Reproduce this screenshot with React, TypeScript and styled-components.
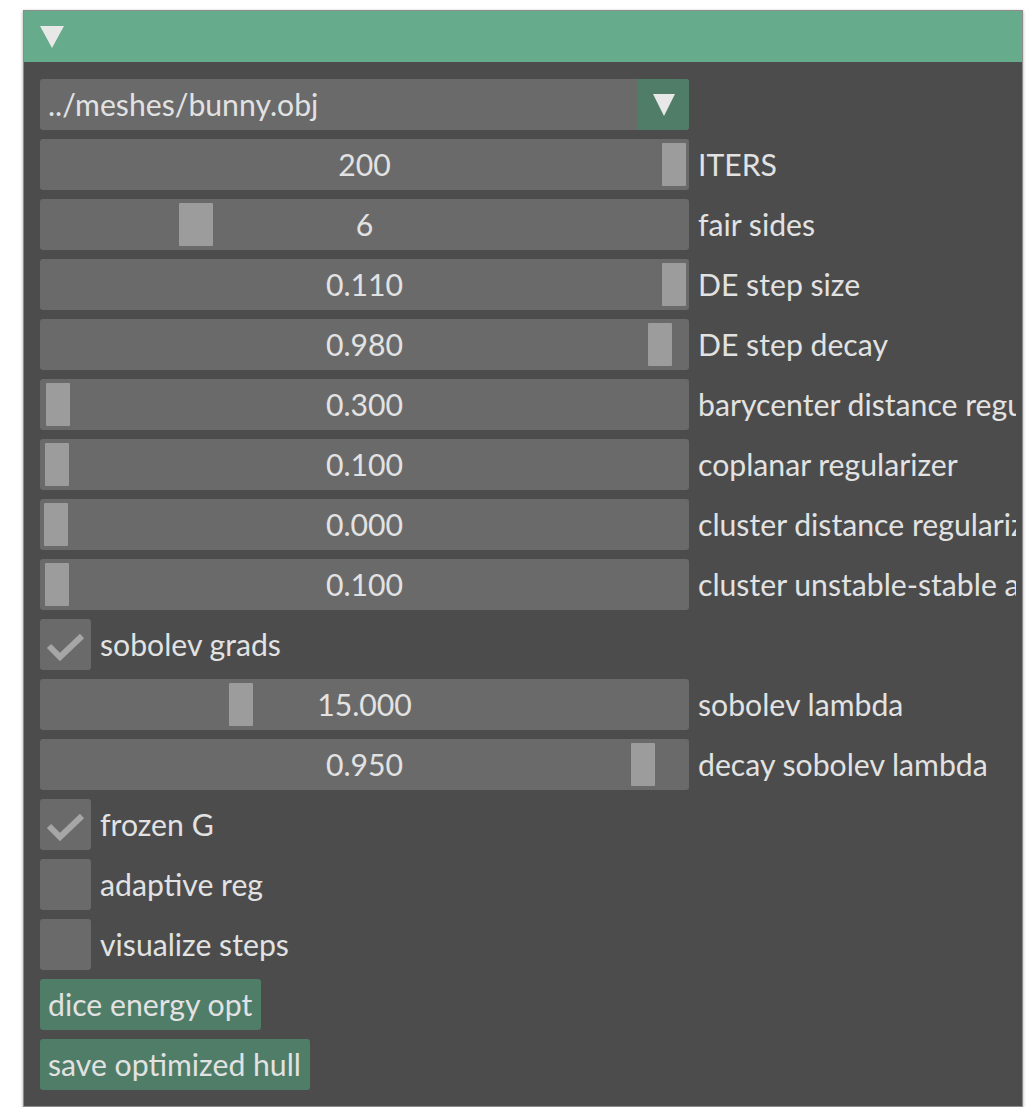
import React from "react";
import styled, { createGlobalStyle } from "styled-components";

const Global = createGlobalStyle`
  html, body { margin: 0; padding: 0; background: #ffffff; }
  body { font-family: Lato, "Open Sans", sans-serif; }
`;

const Page = styled.div`
  padding: 10px 0 0 23px;
`;

const Panel = styled.div`
  width: 998px;
  border: 1px solid #8c8c8c;
  background: #4c4c4c;
  box-shadow: 0 1px 3px rgba(0, 0, 0, 0.35);
  color: #e2e2e2;
  font-family: Lato, "Open Sans", sans-serif;
  font-size: 30.2px;
`;

const TitleBar = styled.div`
  height: 51px;
  background: #66ab8c;
  display: flex;
  align-items: center;
  padding-left: 16px;
`;

const Body = styled.div`
  padding: 17px 6px 16px 16px;
  display: flex;
  flex-direction: column;
  gap: 9px;
`;

const Row = styled.div`
  display: flex;
  align-items: center;
  gap: 9px;
  height: 51px;
  white-space: nowrap;
  overflow: hidden;
`;

const Label = styled.span`
  line-height: 51px;
  white-space: nowrap;
`;

const Combo = styled.div`
  width: 649px;
  height: 51px;
  display: flex;
  border-radius: 3px;
  overflow: hidden;
  background: #6a6a6a;
  flex-shrink: 0;
`;

const ComboText = styled.div`
  flex: 1;
  padding-left: 8px;
  line-height: 51px;
`;

const ComboArrow = styled.div`
  width: 51px;
  height: 51px;
  background: #4f7d68;
  display: flex;
  align-items: center;
  justify-content: center;
`;

const SliderFrame = styled.div`
  position: relative;
  width: 649px;
  height: 51px;
  background: #6a6a6a;
  border-radius: 3px;
  flex-shrink: 0;
  display: flex;
  align-items: center;
  justify-content: center;
`;

const Grab = styled.div<{ $w: number }>`
  position: absolute;
  top: 4px;
  bottom: 4px;
  width: ${(p) => p.$w}px;
  background: #9c9c9c;
  border-radius: 1px;
`;

const SliderValue = styled.span`
  position: relative;
  line-height: 51px;
`;

const CheckBox = styled.div`
  width: 51px;
  height: 51px;
  background: #6a6a6a;
  border-radius: 3px;
  flex-shrink: 0;
  display: flex;
  align-items: center;
  justify-content: center;
`;

const Button = styled.div`
  height: 51px;
  line-height: 51px;
  padding: 0 9px 0 8px;
  background: #4f7d68;
  border-radius: 3px;
  flex-shrink: 0;
`;

const Triangle = ({ w, h }: { w: number; h: number }) => (
  <svg width={w} height={h} viewBox={`0 0 ${w} ${h}`}>
    <polygon points={`0,0 ${w},0 ${w / 2},${h}`} fill="#e8e8e8" />
  </svg>
);

const Check = () => (
  <svg width="51" height="51" viewBox="0 0 51 51">
    <polyline
      points="9,27 20,38 42,17"
      fill="none"
      stroke="#a6a6a6"
      strokeWidth="6"
      strokeLinecap="butt"
      strokeLinejoin="miter"
    />
  </svg>
);

type Item =
  | { kind: "slider"; value: string; label: string; grab: number; w?: number }
  | { kind: "check"; label: string; checked: boolean }
  | { kind: "button"; label: string };

const items: Item[] = [
  { kind: "slider", value: "200", label: "ITERS", grab: 622 },
  { kind: "slider", value: "6", label: "fair sides", grab: 139, w: 34 },
  { kind: "slider", value: "0.110", label: "DE step size", grab: 622 },
  { kind: "slider", value: "0.980", label: "DE step decay", grab: 608 },
  { kind: "slider", value: "0.300", label: "barycenter distance regularizer", grab: 6 },
  { kind: "slider", value: "0.100", label: "coplanar regularizer", grab: 5 },
  { kind: "slider", value: "0.000", label: "cluster distance regularizer", grab: 4 },
  { kind: "slider", value: "0.100", label: "cluster unstable-stable angle", grab: 5 },
  { kind: "check", label: "sobolev grads", checked: true },
  { kind: "slider", value: "15.000", label: "sobolev lambda", grab: 189 },
  { kind: "slider", value: "0.950", label: "decay sobolev lambda", grab: 591 },
  { kind: "check", label: "frozen G", checked: true },
  { kind: "check", label: "adaptive reg", checked: false },
  { kind: "check", label: "visualize steps", checked: false },
  { kind: "button", label: "dice energy opt" },
  { kind: "button", label: "save optimized hull" },
];

export default function App() {
  return (
    <Page>
      <Global />
      <Panel>
        <TitleBar>
          <Triangle w={24} h={22} />
        </TitleBar>
        <Body>
          <Row>
            <Combo>
              <ComboText>../meshes/bunny.obj</ComboText>
              <ComboArrow>
                <Triangle w={22} h={22} />
              </ComboArrow>
            </Combo>
          </Row>
          {items.map((it, i) => {
            if (it.kind === "slider") {
              return (
                <Row key={i}>
                  <SliderFrame>
                    <Grab $w={it.w ?? 24} style={{ left: it.grab }} />
                    <SliderValue>{it.value}</SliderValue>
                  </SliderFrame>
                  <Label>{it.label}</Label>
                </Row>
              );
            }
            if (it.kind === "check") {
              return (
                <Row key={i}>
                  <CheckBox>{it.checked && <Check />}</CheckBox>
                  <Label>{it.label}</Label>
                </Row>
              );
            }
            return (
              <Row key={i}>
                <Button>{it.label}</Button>
              </Row>
            );
          })}
        </Body>
      </Panel>
    </Page>
  );
}
